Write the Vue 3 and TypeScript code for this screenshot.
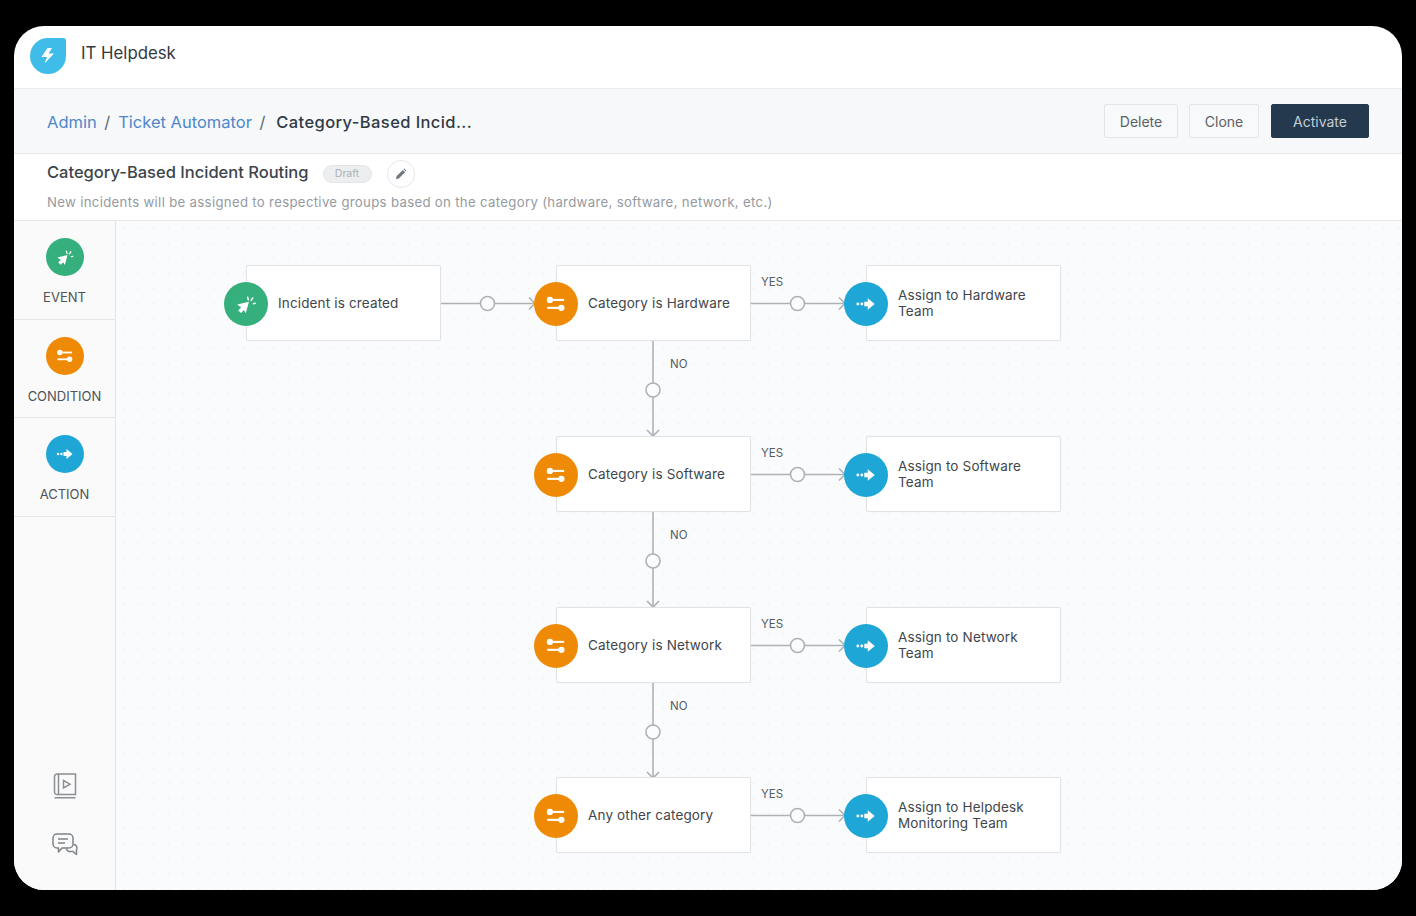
<template>
  <div class="page">
    <svg class="defs" width="0" height="0" aria-hidden="true">
      <defs>
        <symbol id="ic-event" viewBox="0 0 24 24">
          <path d="M4.5 12.5 L14.5 10 L11.8 20 L10.2 17.2 L7.8 19.8 L5.2 17.6 L7.8 15 Z" fill="#fff" />
          <path d="M13.4 6.2 L14 8.4 M17.8 6.8 L16.4 8.9 M19.8 11.4 L18.4 11.7" stroke="#fff" stroke-width="1.3" stroke-linecap="round" fill="none" />
        </symbol>
        <symbol id="ic-condition" viewBox="0 0 24 24">
          <circle cx="6.8" cy="8.5" r="2.7" fill="#fff" />
          <rect x="9.5" y="7.6" width="9.5" height="1.8" fill="#fff" />
          <rect x="4.5" y="14.4" width="10" height="1.8" fill="#fff" />
          <circle cx="16.6" cy="15.3" r="2.7" fill="#fff" />
        </symbol>
        <symbol id="ic-action" viewBox="0 0 24 24">
          <circle cx="5" cy="12" r="1.2" fill="#fff" />
          <circle cx="8.4" cy="12" r="1.2" fill="#fff" />
          <path d="M10.5 10 H13.5 V7 L19.5 12 L13.5 17 V14 H10.5 Z" fill="#fff" />
        </symbol>
      </defs>
    </svg>

    <div class="window">
      <header class="topbar">
        <svg class="logo" width="36" height="36" viewBox="0 0 36 36">
          <path d="M18 0 H33 A3 3 0 0 1 36 3 V18 A18 18 0 1 1 18 0 Z" fill="#3fbce8" />
          <path d="M17.5 10 H22 L18.5 15.5 H24 L14.5 25.5 L17 19 H11.5 Z" fill="#fff" />
        </svg>
        <span class="app-name">IT Helpdesk</span>
      </header>

      <div class="crumbbar">
        <nav class="crumbs">
          <a>Admin</a>
          <span class="sep">/</span>
          <a>Ticket Automator</a>
          <span class="sep last">/</span>
          <strong>Category-Based Incid...</strong>
        </nav>
        <div class="actions">
          <button class="btn btn-delete">Delete</button>
          <button class="btn btn-clone">Clone</button>
          <button class="btn primary">Activate</button>
        </div>
      </div>

      <section class="titlebar">
        <div class="title-row">
          <h1>Category-Based Incident Routing</h1>
          <span class="badge">Draft</span>
          <span class="edit">
            <svg width="12" height="12" viewBox="0 0 12 12">
              <path d="M1 11 L1.6 8.2 L7.8 2 L10 4.2 L3.8 10.4 Z M8.5 1.3 L9.3 0.6 L11.4 2.7 L10.7 3.5 Z" fill="#6d7680" />
            </svg>
          </span>
        </div>
        <p class="desc">New incidents will be assigned to respective groups based on the category (hardware, software, network, etc.)</p>
      </section>

      <main class="body">
        <aside class="sidebar">
          <div v-for="p in palette" :key="p.label" class="tool">
            <span class="tool-icon" :class="p.kind">
              <svg width="24" height="24"><use :href="'#ic-' + p.kind" /></svg>
            </span>
            <span class="tool-label">{{ p.label }}</span>
          </div>
          <div class="side-foot">
            <svg width="24" height="26" viewBox="0 0 24 26" fill="none" stroke="#8b8f93" stroke-width="1.5">
              <path d="M4 1 H22.5 V21.5 H4 A2.5 2.5 0 0 1 1.5 19 V3.5 A2.5 2.5 0 0 1 4 1 Z" />
              <path d="M5.5 1 V21.5" />
              <path d="M1.5 24.8 H22.5" stroke-width="1.6" />
              <path d="M10.5 7.5 L17 11.2 L10.5 15 Z" />
            </svg>
            <svg class="chat" width="28" height="24" viewBox="0 0 28 24" fill="none" stroke="#7f8488" stroke-width="1.5" stroke-linejoin="round">
              <path d="M5 1 H17 A4 4 0 0 1 21 5 V11 A4 4 0 0 1 17 15 H10 L6.5 19 V15 H5 A4 4 0 0 1 1 11 V5 A4 4 0 0 1 5 1 Z" />
              <path d="M6 6 H16 M6 10 H13" />
              <path d="M21.5 11.5 A3.6 3.6 0 0 1 24.5 17 V21.5 L21 18.5 H16.5 L14 16" />
            </svg>
          </div>
        </aside>

        <div class="canvas">
          <svg class="wires" width="1286" height="669">
            <g v-for="(w, i) in wires" :key="i" fill="none" stroke="#aeb2b6" stroke-width="1.6">
              <path :d="w.line" />
              <path :d="w.head" />
              <circle :cx="w.cx" :cy="w.cy" r="7" fill="#fbfcfd" />
            </g>
          </svg>

          <div
            v-for="n in nodes"
            :key="n.text"
            class="node"
            :style="{ left: n.x + 'px', top: n.y + 'px' }"
          >
            <span class="node-icon" :class="n.kind">
              <svg width="28" height="28"><use :href="'#ic-' + n.kind" /></svg>
            </span>
            <span class="node-text">{{ n.text }}</span>
          </div>

          <span
            v-for="(l, i) in labels"
            :key="i"
            class="edge-label"
            :style="{ left: l.x + 'px', top: l.y + 'px' }"
          >{{ l.text }}</span>
        </div>
      </main>
    </div>
  </div>
</template>

<script setup lang="ts">
type Kind = 'event' | 'condition' | 'action'

const palette: { kind: Kind; label: string }[] = [
  { kind: 'event', label: 'EVENT' },
  { kind: 'condition', label: 'CONDITION' },
  { kind: 'action', label: 'ACTION' },
]

// canvas coordinates of the three columns and four rows
const colX = [130, 440, 750]
const rowY = [44, 215, 386, 556]
const NODE_W = 195
const NODE_H = 76

const rows = [
  ['Category is Hardware', 'Assign to Hardware Team'],
  ['Category is Software', 'Assign to Software Team'],
  ['Category is Network', 'Assign to Network Team'],
  ['Any other category', 'Assign to Helpdesk Monitoring Team'],
]

const nodes: { kind: Kind; text: string; x: number; y: number }[] = [
  { kind: 'event', text: 'Incident is created', x: colX[0], y: rowY[0] },
]
rows.forEach((r, i) => {
  nodes.push({ kind: 'condition', text: r[0], x: colX[1], y: rowY[i] })
  nodes.push({ kind: 'action', text: r[1], x: colX[2], y: rowY[i] })
})

const hWire = (x: number, y: number) => {
  const mid = y + NODE_H / 2 + 0.5
  const x1 = x + NODE_W
  const end = x1 + 94
  return {
    line: `M${x1} ${mid} H${end}`,
    head: `M${end - 6} ${mid - 6} L${end} ${mid} L${end - 6} ${mid + 6}`,
    cx: x1 + 46.5,
    cy: mid,
  }
}

const vWire = (y: number) => {
  const x = colX[1] + 97
  const y1 = y + NODE_H
  const end = y1 + 95
  return {
    line: `M${x} ${y1} V${end}`,
    head: `M${x - 6} ${end - 6} L${x} ${end} L${x + 6} ${end - 6}`,
    cx: x,
    cy: y1 + 49,
  }
}

const wires = [
  hWire(colX[0], rowY[0]),
  ...rowY.map((y) => hWire(colX[1], y)),
  ...rowY.slice(0, 3).map((y) => vWire(y)),
]

const labels = [
  ...rowY.map((y) => ({ text: 'YES', x: colX[1] + 205, y: y + 10 })),
  ...rowY.slice(0, 3).map((y) => ({ text: 'NO', x: colX[1] + 114, y: y + 92 })),
]
</script>

<style>
html,
body {
  margin: 0;
  background: #000;
}
</style>

<style scoped>
.page {
  width: 1416px;
  height: 916px;
  box-sizing: border-box;
  padding: 26px 14px;
  background: #000;
  font-family: Inter, 'Liberation Sans', sans-serif;
  color: #2f3a44;
}
.defs {
  position: absolute;
}
.window {
  height: 864px;
  border-radius: 30px;
  overflow: hidden;
  background: #fff;
  display: flex;
  flex-direction: column;
}
.topbar {
  height: 63px;
  flex: none;
  display: flex;
  align-items: center;
  gap: 15px;
  padding: 0 0 8px 16px;
  box-sizing: border-box;
  border-bottom: 1px solid #e9ebed;
}
.logo {
  margin-top: 5px;
}
.app-name {
  font-size: 16.8px;
  font-weight: 400;
  color: #33393f;
}
.crumbbar {
  height: 65px;
  flex: none;
  box-sizing: border-box;
  display: flex;
  align-items: center;
  justify-content: space-between;
  padding: 0 33px;
  background: #f6f8fa;
  border-bottom: 1px solid #e6e9eb;
}
.crumbs {
  display: flex;
  align-items: center;
  font-size: 16.5px;
  margin-top: 2px;
}
.crumbs a {
  color: #4f87c9;
}
.crumbs .sep {
  margin: 0 8px 0 7.5px;
  color: #5d666e;
}
.crumbs .sep.last {
  margin-right: 11px;
}
.crumbs strong {
  font-weight: 500;
  letter-spacing: 0.4px;
  color: #303a44;
}
.actions {
  display: flex;
  gap: 11px;
}
.btn {
  height: 34px;
  box-sizing: border-box;
  border: 1px solid #e3e6e8;
  border-radius: 2px;
  background: #f7f9fa;
  font: 400 14px Inter, 'Liberation Sans', sans-serif;
  color: #5b6167;
  padding: 1px 0 0;
}
.btn-delete {
  width: 74px;
}
.btn-clone {
  width: 70px;
}
.btn.primary {
  width: 98px;
  margin-left: 1px;
  background: #24384e;
  border-color: #24384e;
  color: #c4ccd4;
}
.titlebar {
  height: 67px;
  flex: none;
  box-sizing: border-box;
  padding: 5px 33px 0;
  border-bottom: 1px solid #e6e8ea;
}
.title-row {
  display: flex;
  align-items: center;
  height: 30px;
}
.title-row h1 {
  margin: 0 0 4px;
  font-size: 16.5px;
  font-weight: 500;
  color: #3c444c;
}
.badge {
  margin-left: 14px;
  width: 49px;
  height: 18px;
  border-radius: 9px;
  background: #eceef0;
  border: 1px solid #e3e5e7;
  box-sizing: border-box;
  font-size: 10.5px;
  line-height: 16px;
  text-align: center;
  color: #aab0b5;
}
.edit {
  margin-left: 15px;
  width: 28px;
  height: 28px;
  box-sizing: border-box;
  border: 1px solid #e7e8ea;
  border-radius: 50%;
  display: flex;
  align-items: center;
  justify-content: center;
}
.desc {
  margin: 5px 0 0;
  font-size: 13.2px;
  color: #959a9f;
  letter-spacing: 0.32px;
}
.body {
  flex: 1;
  min-height: 0;
  display: flex;
}
.sidebar {
  width: 102px;
  flex: none;
  box-sizing: border-box;
  background: #fafafa;
  border-right: 1.5px solid #e3e4e6;
  display: flex;
  flex-direction: column;
}
.tool {
  height: 98.5px;
  box-sizing: border-box;
  border-bottom: 1px solid #e4e5e6;
  display: flex;
  flex-direction: column;
  align-items: center;
  padding-top: 17px;
  gap: 14px;
}
.tool-icon {
  width: 38px;
  height: 38px;
  border-radius: 50%;
  display: flex;
  align-items: center;
  justify-content: center;
}
.tool-label {
  font-size: 13px;
  line-height: 15px;
  color: #4d5357;
}
.event {
  background: #35b07c;
}
.condition {
  background: #ef8a07;
}
.action {
  background: #1ea7d6;
}
.side-foot {
  margin-top: auto;
  padding-bottom: 33px;
  display: flex;
  flex-direction: column;
  align-items: center;
  gap: 34px;
}
.chat {
  margin-left: 2px;
}
.canvas {
  position: relative;
  flex: 1;
  background-color: #fafbfc;
  background-image: radial-gradient(circle, #f3f5f7 1px, transparent 1.2px);
  background-size: 15px 15px;
}
.wires {
  position: absolute;
  left: 0;
  top: 0;
}
.node {
  position: absolute;
  width: 195px;
  height: 76px;
  box-sizing: border-box;
  background: #fff;
  border: 1px solid #e1e3e6;
  border-radius: 2px;
  box-shadow: 0 0 1px rgba(0, 0, 0, 0.08);
  display: flex;
  align-items: center;
  padding: 0 15px 0 31px;
}
.node-icon {
  position: absolute;
  left: -23px;
  top: 16px;
  width: 44px;
  height: 44px;
  border-radius: 50%;
  display: flex;
  align-items: center;
  justify-content: center;
}
.node-text {
  font-size: 13.5px;
  line-height: 16px;
  letter-spacing: 0.15px;
  color: #3f464c;
}
.edge-label {
  position: absolute;
  font-size: 11.5px;
  line-height: 14px;
  color: #555b60;
}
</style>
